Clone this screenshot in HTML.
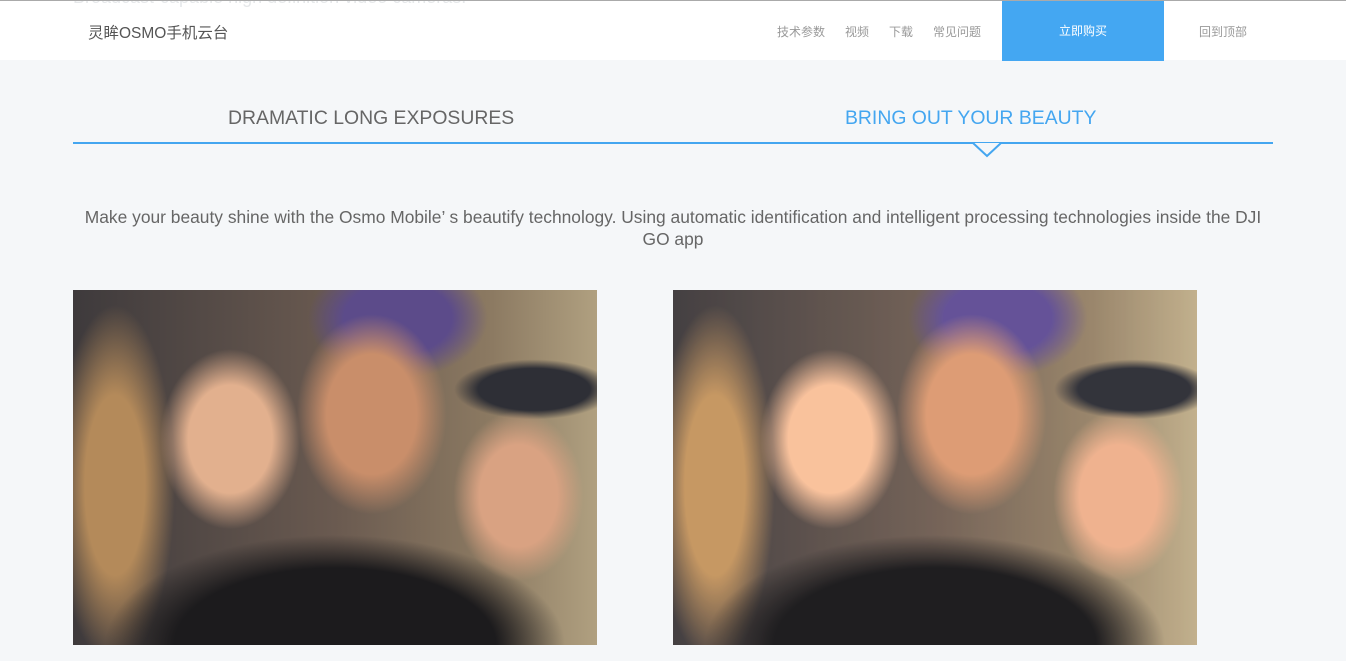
<!DOCTYPE html>
<html><head><meta charset="utf-8"><style>
*{margin:0;padding:0;box-sizing:border-box}
body{width:1346px;height:661px;overflow:hidden;background:#f5f7f9;font-family:"Liberation Sans","Noto Sans CJK SC",sans-serif;position:relative}
.topline{position:absolute;left:0;top:0;width:1346px;height:1px;background:#aaa}
.hdr{position:absolute;top:1px;left:0;width:1346px;height:59px;background:#fff;overflow:hidden}
.ghost{position:absolute;left:73px;top:-14px;font-size:18px;color:#e6e8ea}
.logo{position:absolute;left:88px;top:21px;font-size:15.5px;color:#555}
.nav{position:absolute;top:23px;font-size:12px;color:#999}
.buy{position:absolute;left:1002px;top:1px;width:162px;height:60px;background:#44a7f2;color:#fff;font-size:12px;text-align:center;line-height:60px}
.tab{position:absolute;top:107px;font-size:19.4px;color:#666}
.line{position:absolute;left:73px;top:142px;width:1200px;height:2px;background:#44a6f0}
.desc{position:absolute;left:73px;top:206px;width:1200px;text-align:center;font-size:17.4px;color:#666;line-height:22px}
.ph{position:absolute;top:290px;width:524px;height:355px;overflow:hidden;
background:
radial-gradient(ellipse 70px 90px at 30% 42%,#e2b08e 0 60%,transparent 100%),
radial-gradient(ellipse 75px 100px at 57% 35%,#c98e6a 0 60%,transparent 100%),
radial-gradient(ellipse 65px 85px at 85% 58%,#d9a282 0 60%,transparent 100%),
radial-gradient(ellipse 90px 60px at 62% 8%,#5c4b8a 0 60%,transparent 100%),
radial-gradient(ellipse 80px 30px at 88% 28%,#2e2f36 0 70%,transparent 100%),
radial-gradient(ellipse 230px 110px at 50% 100%,#1c1b1d 0 70%,transparent 100%),
radial-gradient(ellipse 60px 180px at 8% 55%,#b48a5a 0 50%,transparent 100%),
linear-gradient(90deg,#3e3a3c 0%,#6a5a50 50%,#8c7a62 80%,#b0a080 100%);}
</style></head><body>
<div class="topline"></div>
<div class="hdr"><div class="ghost">Broadcast-capable high definition video cameras.</div></div>
<div class="logo">灵眸OSMO手机云台</div>
<div class="nav" style="left:777px">技术参数</div>
<div class="nav" style="left:845px">视频</div>
<div class="nav" style="left:889px">下载</div>
<div class="nav" style="left:933px">常见问题</div>
<div class="buy">立即购买</div>
<div class="nav" style="left:1199px">回到顶部</div>
<div class="tab" style="left:228px">DRAMATIC LONG EXPOSURES</div>
<div class="tab" style="left:845px;color:#44a6f0">BRING OUT YOUR BEAUTY</div>
<div class="line"></div>
<svg style="position:absolute;left:972px;top:140px" width="30" height="20"><polyline points="1,3 15,16 29,3" fill="#f5f7f9" stroke="#44a6f0" stroke-width="2"/><rect x="3" y="0" width="24" height="2" fill="#f5f7f9"/></svg>
<div class="desc">Make your beauty shine with the Osmo Mobile’ s beautify technology. Using automatic identification and intelligent processing technologies inside the DJI GO app</div>
<div class="ph" style="left:73px"></div>
<div class="ph" style="left:673px;filter:brightness(1.1)"></div>
</body></html>
